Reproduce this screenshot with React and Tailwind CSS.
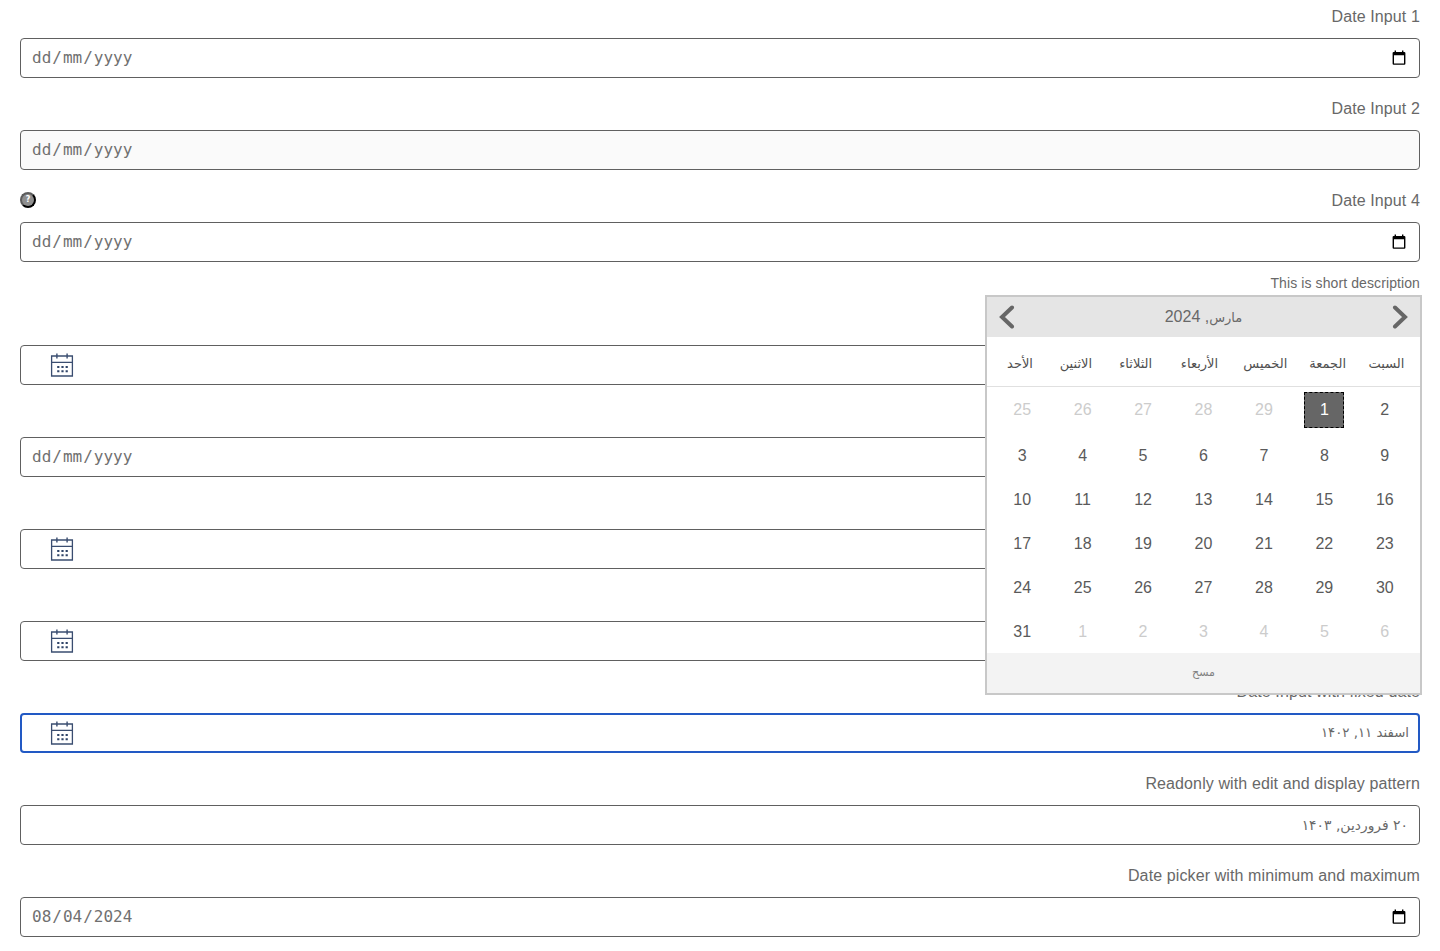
import React from "react";

const DATE_MASK = ["dd", "mm", "yyyy"];

const WEEKDAYS = [
  { name: "الأحد", width: "w-[26px]" },
  { name: "الاثنين", width: "w-[33px]" },
  { name: "الثلاثاء", width: "w-[34px]" },
  { name: "الأربعاء", width: "w-[41px]" },
  { name: "الخميس", width: "w-[38px]" },
  { name: "الجمعة", width: "w-[34px]" },
  { name: "السبت", width: "w-[31px]" },
];

const WEEKS = [
  [25, 26, 27, 28, 29, 1, 2],
  [3, 4, 5, 6, 7, 8, 9],
  [10, 11, 12, 13, 14, 15, 16],
  [17, 18, 19, 20, 21, 22, 23],
  [24, 25, 26, 27, 28, 29, 30],
  [31, 1, 2, 3, 4, 5, 6],
];

function NativeCalendarIcon() {
  return (
    <svg className="mr-[13px] mb-px ml-auto h-[15px] w-[14px]" viewBox="0 0 14 15" aria-hidden="true">
      <path
        fillRule="evenodd"
        d="M2.6 0.600h1.400v1.300h6V0.600h1.400v1.300h0.900q1.100 0 1.100 1.100v10.700q0 1.100-1.100 1.100H1.700q-1.100 0-1.100-1.100V3q0-1.100 1.100-1.100h0.900zM2 5.300v8.200h10V5.300z"
      />
    </svg>
  );
}

function PickerIcon() {
  return (
    <svg className="mb-px ml-[29px] h-6 w-6" viewBox="0 0 24 24" fill="none" stroke="#3a4d70" aria-hidden="true">
      <path strokeWidth="1.300" d="M1.600 3h20.800v20H1.600zM1.600 9.300h20.800" />
      <path strokeWidth="1.400" d="M6.900 0.600v5M17.100 0.600v5" />
      <path
        fill="#2f4468"
        stroke="none"
        d="M7.200 13h2.200v2H7.200zM11.400 13h2.200v2h-2.200zM15.600 13h2.200v2h-2.200zM7.200 17.200h2.200v2H7.200zM11.400 17.200h2.200v2h-2.200zM15.600 17.200h2.200v2h-2.200z"
      />
    </svg>
  );
}

function DateSegments({ parts = DATE_MASK }) {
  return (
    <span className="ml-[10px] flex font-['DejaVu_Sans_Mono','Liberation_Mono',monospace] text-[16px] leading-6 text-[#707070]">
      {parts.map((part, i) => (
        <React.Fragment key={i}>
          {i > 0 && <span>/</span>}
          <span className="px-px">{part}</span>
        </React.Fragment>
      ))}
    </span>
  );
}

function Field({ label, help, disabled, focused, description, children }) {
  return (
    <div className="mb-[18px]">
      <div className="flex h-6 items-center justify-between">
        {help ? (
          <button className="flex h-4 w-4 items-center justify-center rounded-full border-2 border-t-[#5c5c5c] border-r-black border-b-black border-l-[#5c5c5c] bg-[#8f8f8f] font-['DejaVu_Sans',sans-serif] text-[8px] leading-none font-bold text-white">
            ?
          </button>
        ) : (
          <span />
        )}
        <span className="pt-px text-[16px] tracking-[0.11px]">{label}</span>
      </div>
      <div
        className={
          "mt-[10px] flex h-10 items-center rounded-[4px] " +
          (focused ? "border-2 border-[#2259c4] " : "border border-[#606060] ") +
          (disabled ? "bg-[#fafafa]" : "bg-white")
        }
      >
        {children}
      </div>
      {description && (
        <div className="mt-[11px] h-5 text-right text-[14px] leading-5 tracking-[0.1px]">{description}</div>
      )}
    </div>
  );
}

function Chevron({ d }) {
  return (
    <svg className="h-6 w-4" viewBox="0 0 16 24" fill="none" stroke="#666" strokeWidth="4" strokeLinecap="round" aria-hidden="true">
      <path d={d} />
    </svg>
  );
}

function Calendar() {
  return (
    <div className="absolute top-[295px] left-[985px] w-[437px] border-2 border-[#c8c8c8] bg-white">
      <div className="flex h-10 items-center justify-between bg-[#e5e5e5] px-3">
        <Chevron d="M13 2.500L3 12L13 21.500" />
        <div dir="rtl" className="text-[16px]">
          <span className="font-['DejaVu_Sans',sans-serif] text-[13px]">مارس</span>, 2024
        </div>
        <Chevron d="M3 2.500L13 12L3 21.500" />
      </div>
      <div className="flex h-[50px] items-center justify-between border-b border-[#e0e0e0] pt-[5px] pr-[18px] pl-5 font-['DejaVu_Sans',sans-serif] text-[13px] text-[#505050]">
        {WEEKDAYS.map(({ name, width }) => (
          <div key={name} dir="rtl" className={"flex justify-center whitespace-nowrap " + width}>
            {name}
          </div>
        ))}
      </div>
      {WEEKS.map((week, w) => (
        <div
          key={w}
          className={"grid grid-cols-7 items-center justify-items-center px-[5px] " + (w === 0 ? "h-[46px]" : "h-11 pt-px")}
        >
          {week.map((day, i) => {
            const outside = (w === 0 && day > 20) || (w === 5 && day < 7);
            if (w === 0 && day === 1) {
              return (
                <div key={i} className="flex h-9 w-10 items-center justify-center border border-dashed border-black bg-[#666] text-white">
                  {day}
                </div>
              );
            }
            return (
              <div key={i} className={outside ? "text-[#ccc]" : "text-[#5a5a5a]"}>
                {day}
              </div>
            );
          })}
        </div>
      ))}
      <div dir="rtl" className="flex h-10 items-center justify-center bg-[#f3f3f3] font-['DejaVu_Sans',sans-serif] text-[11px] text-[#808080]">
        مسح
      </div>
    </div>
  );
}

export default function App() {
  return (
    <main className="relative h-[951px] w-[1440px] overflow-hidden bg-white px-5 pt-1 font-['Liberation_Sans',Arial,sans-serif] text-[16px] text-[#686868]">
      <Field label="Date Input 1"><DateSegments /><NativeCalendarIcon /></Field>
      <Field label="Date Input 2" disabled><DateSegments /></Field>
      <Field label="Date Input 4" help description="This is short description"><DateSegments /><NativeCalendarIcon /></Field>
      <Field><PickerIcon /></Field>
      <Field><DateSegments /></Field>
      <Field><PickerIcon /></Field>
      <Field><PickerIcon /></Field>
      <Field label="Date Input with fixed date" focused>
        <div className="-ml-px"><PickerIcon /></div>
        <div dir="rtl" className="mr-[9px] ml-auto font-['DejaVu_Sans',sans-serif] text-[13.3px]">اسفند ۱۱, ۱۴۰۲</div>
      </Field>
      <Field label="Readonly with edit and display pattern">
        <div dir="rtl" className="mr-[11px] ml-auto font-['DejaVu_Sans',sans-serif] text-[13.9px]">۲۰ فروردین, ۱۴۰۳</div>
      </Field>
      <Field label="Date picker with minimum and maximum"><DateSegments parts={["08", "04", "2024"]} /><NativeCalendarIcon /></Field>
      <Calendar />
    </main>
  );
}
